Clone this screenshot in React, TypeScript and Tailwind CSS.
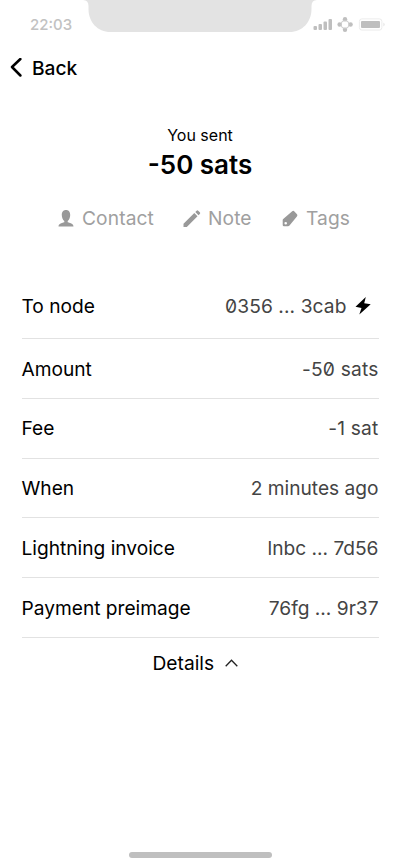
import React from "react";

type RowProps = { label: string; value: string; size: string; spacing?: string; bolt?: boolean };

function Row({ label, value, size, spacing = "", bolt }: RowProps) {
  return (
    <div className={`flex items-center justify-between border-b border-[#e2e2e2] ${size}`}>
      <span className="text-black">{label}</span>
      <span className="flex items-center text-[#444]">
        <span className={spacing}>{value}</span>
        {bolt && (
          <svg className="ml-[8px] mr-[8px] h-[18px] w-[16px]" viewBox="0 0 16 18" fill="#000">
            <path d="M10.800 0 .5 9.700l6 1.300-2.200 6.500L15.700 7.300 9.200 6.200Z" />
          </svg>
        )}
      </span>
    </div>
  );
}

function StatusBar() {
  return (
    <div className="flex h-8 justify-between">
      <div className="w-[83px] pl-[30px] pt-[14px] text-[15px] font-medium leading-[22px] text-[#c2c2c2]">22:03</div>
      <svg className="h-8 w-[234px] shrink-0" viewBox="0 0 234 32" fill="#e3e3e3">
        <path d="M0 0h234q-5.500 0-5.500 6v3c0 13-9 23-22 23h-179C14.500 32 5.500 22 5.500 9V6Q5.500 0 0 0Z" />
      </svg>
      <svg className="h-8 w-[83px]" viewBox="317 0 83 32" overflow="visible">
        <g fill="#bfbfbf">
          <rect x="313.500" y="26" width="3.500" height="4" rx="1" />
          <rect x="318.500" y="24" width="3.500" height="6" rx="1" />
          <rect x="323.500" y="21.500" width="3.500" height="8.500" rx="1" />
          <rect x="328.500" y="19" width="3.500" height="11" rx="1" />
          <circle cx="345" cy="19.300" r="2.200" />
          <circle cx="350.600" cy="24.500" r="2.200" />
          <circle cx="345" cy="29.800" r="2.200" />
          <circle cx="339.600" cy="24.500" r="2.200" />
          <rect x="361" y="21" width="19" height="7" rx="1" />
        </g>
        <circle cx="345" cy="24.500" r="4" fill="none" stroke="#ccc" strokeWidth="1" />
        <rect x="359.400" y="18.900" width="22.500" height="11.200" rx="2.500" fill="none" stroke="#ececec" />
        <path d="M383.300 22.500q3 2 0 4Z" fill="#e8e8e8" />
      </svg>
    </div>
  );
}

export default function App() {
  return (
    <main className="flex h-[866px] w-[400px] flex-col overflow-hidden bg-white font-['Inter',sans-serif] text-black">
      <StatusBar />
      <header className="mt-[24px] flex h-6 items-center pl-[10px]">
        <svg className="h-5 w-3" viewBox="0 0 12 20" fill="none" stroke="#000" strokeWidth="2.500" strokeLinecap="round" strokeLinejoin="round">
          <path d="M10.400 1 2 9l8.400 8.500" />
        </svg>
        <span className="ml-[10px] text-[19.200px] font-medium leading-6">Back</span>
      </header>
      <section className="mt-[45px] flex flex-col items-center">
        <p className="text-[16px] leading-5">You sent</p>
        <h1 className="mt-[5px] text-[26px] font-semibold leading-[30px]">-50 sats</h1>
      </section>
      <nav className="mt-[26px] flex h-6 items-center pl-[58px] text-[19.200px] tracking-[0.100px] text-[#a0a0a0]">
        <svg className="mt-px h-[18px] w-4" viewBox="0 0 16 18" fill="#999">
          <path d="M8 0C5 0 3.800 2.300 3.800 5c0 2.600 1 4.800 2.500 5.900v1.300C3 13 .7 13.800.5 16.500h15c-.2-2.700-2.500-3.500-5.800-4.300v-1.300c1.500-1.100 2.500-3.300 2.500-5.900C12.200 2.300 11 0 8 0Z" />
        </svg>
        <span className="ml-[8px] w-[73px] whitespace-nowrap">Contact</span>
        <svg className="ml-[28px] mt-px h-[18px] w-[18px]" viewBox="0 0 18 18" fill="#999">
          <path d="M.5 13.700 11.300 3l3.200 3.200L3.800 16.900H.5ZM12.300 2l1.300-1.300q.8-.8 1.600 0l1.600 1.600q.8.8 0 1.600l-1.300 1.300Z" />
        </svg>
        <span className="ml-[7px] w-[44px] whitespace-nowrap">Note</span>
        <svg className="ml-[30px] mt-px h-[18px] w-[16px]" viewBox="0 0 16 18" fill="#999">
          <path fillRule="evenodd" d="m1.200 8.900 9-7.600q1.200-1 2.200.1l2.600 2.900q.9 1-.1 2.200L7.500 15.500q-.6.700-1.500.7H2q-1.300 0-1.300-1.300V10.100q0-.7.500-1.200ZM3.700 11.900a1.300 1.300 0 1 0 0 2.600 1.300 1.300 0 0 0 0-2.600Z" />
        </svg>
        <span className="ml-[8px]">Tags</span>
      </nav>
      <section className="mx-[21.500px] mt-[45px] text-[19.150px] leading-6">
        <Row label="To node" value="0356 ... 3cab" size="h-[64px] pb-px" spacing="slashed-zero tracking-[0.1px]" bolt />
        <Row label="Amount" value="-50 sats" size="h-[60px] pt-px" spacing="slashed-zero tracking-[0.2px]" />
        <Row label="Fee" value="-1 sat" size="h-[60px] pb-px" spacing="tracking-[0.2px]" />
        <Row label="When" value="2 minutes ago" size="h-[59px]" />
        <Row label="Lightning invoice" value="lnbc ... 7d56" size="h-[60px] pt-px" />
        <Row label="Payment preimage" value="76fg ... 9r37" size="h-[60px] pt-px" />
      </section>
      <button className="mt-[13px] flex h-6 items-center pl-[152.500px] text-[19.200px] leading-6">
        Details
        <svg className="ml-[11px] h-[8px] w-[13px]" viewBox="0 0 13 8" fill="none" stroke="#222" strokeWidth="1.300">
          <path d="m.7 7.300 5.800-6 5.800 6" />
        </svg>
      </button>
      <div className="mb-[8px] ml-[129px] mt-auto h-[6px] w-[143px] rounded-full bg-[#bfbfbf]" />
    </main>
  );
}
